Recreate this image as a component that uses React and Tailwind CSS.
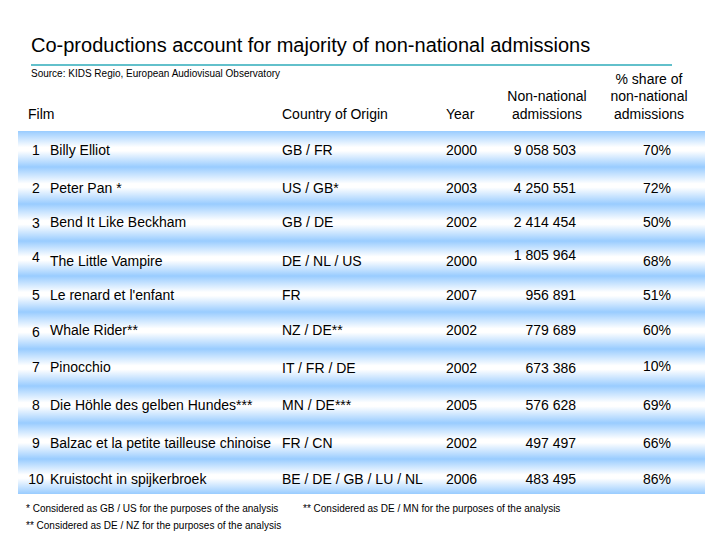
import React from "react";

const rows = [
  { n: "1", film: "Billy Elliot", c: "GB / FR", y: "2000", a: "9 058 503", p: "70%", h: "h-[36px]", pt: "pt-[11px]", ov: {} },
  { n: "2", film: "Peter Pan *", c: "US / GB*", y: "2003", a: "4 250 551", p: "72%", h: "h-[37px]", pt: "pt-[13px]", ov: {} },
  { n: "3", film: "Bend It Like Beckham", c: "GB / DE", y: "2002", a: "2 414 454", p: "50%", h: "h-[37px]", pt: "pt-[10px]", ov: { 0: "pt-[11px]" } },
  { n: "4", film: "The Little Vampire", c: "DE / NL / US", y: "2000", a: "1 805 964", p: "68%", h: "h-[35px]", pt: "pt-[12px]", ov: { 0: "pt-[8px]", 4: "pt-[6px]" } },
  { n: "5", film: "Le renard et l'enfant", c: "FR", y: "2007", a: "956 891", p: "51%", h: "h-[36px]", pt: "pt-[11px]", ov: {} },
  { n: "6", film: "Whale Rider**", c: "NZ / DE**", y: "2002", a: "779 689", p: "60%", h: "h-[37px]", pt: "pt-[10px]", ov: { 0: "pt-[12px]" } },
  { n: "7", film: "Pinocchio", c: "IT / FR / DE", y: "2002", a: "673 386", p: "10%", h: "h-[37px]", pt: "pt-[11px]", ov: { 0: "pt-[10px]", 1: "pt-[10px]", 5: "pt-[9px]" } },
  { n: "8", film: "Die Höhle des gelben Hundes***", c: "MN / DE***", y: "2005", a: "576 628", p: "69%", h: "h-[37px]", pt: "pt-[11px]", ov: {} },
  { n: "9", film: "Balzac et la petite tailleuse chinoise", c: "FR / CN", y: "2002", a: "497 497", p: "66%", h: "h-[36px]", pt: "pt-[12px]", ov: {} },
  { n: "10", film: "Kruistocht in spijkerbroek", c: "BE / DE / GB / LU / NL", y: "2006", a: "483 495", p: "86%", h: "h-[35px]", pt: "pt-[12px]", ov: {} },
];

function Row({ r }) {
  const cls = (i) => r.ov[i] || r.pt;
  return (
    <div
      className={`grid grid-cols-[32px_232px_164px_54px_76px_95px_34px] items-start ${r.h} bg-[linear-gradient(to_bottom,#99ccff_0%,#ffffff_45%,#ffffff_55%,#99ccff_100%)] text-[14px] leading-[17px] text-black whitespace-nowrap`}
    >
      <div className={`pl-[4px] text-center ${cls(0)}`}>{r.n}</div>
      <div className={cls(1)}>{r.film}</div>
      <div className={cls(2)}>{r.c}</div>
      <div className={cls(3)}>{r.y}</div>
      <div className={`text-right ${cls(4)}`}>{r.a}</div>
      <div className={`text-right ${cls(5)}`}>{r.p}</div>
      <div />
    </div>
  );
}

export default function App() {
  return (
    <div className="w-[720px] h-[540px] bg-white overflow-hidden font-['Liberation_Sans',Arial,sans-serif] text-black">
      <div className="pl-[31px] pt-[33px]">
        <div className="text-[20px] leading-[24px] whitespace-nowrap">
          Co-productions account for majority of non-national admissions
        </div>
        <div className="mt-[7px] h-[2px] w-[641px] bg-[#62c0cb]" />
      </div>

      <div className="ml-[18px] w-[687px]">
        <div className="mt-[2px] h-[63px] pb-[8px] grid grid-cols-[264px_164px_54px_94px_111px] items-end text-[14px] leading-[17.5px]">
          <div className="self-stretch flex flex-col justify-between">
            <div className="pl-[13px] text-[10px] leading-[11px] whitespace-nowrap">
              Source: KIDS Regio, European Audiovisual Observatory
            </div>
            <div className="pl-[10px]">Film</div>
          </div>
          <div>Country of Origin</div>
          <div>Year</div>
          <div className="text-center">
            Non-national
            <br />
            admissions
          </div>
          <div className="text-center pr-[1px]">
            % share of
            <br />
            non-national
            <br />
            admissions
          </div>
        </div>

        <div className="flex flex-col">
          {rows.map((r) => (
            <Row key={r.n} r={r} />
          ))}
        </div>
      </div>

      <div className="mt-[6px] flex text-[10px] leading-[17px] whitespace-nowrap">
        <div className="pl-[26px] w-[303px] flex flex-col">
          <div>* Considered as GB / US for the purposes of the analysis</div>
          <div>** Considered as DE / NZ for the purposes of the analysis</div>
        </div>
        <div>** Considered as DE / MN for the purposes of the analysis</div>
      </div>
    </div>
  );
}
